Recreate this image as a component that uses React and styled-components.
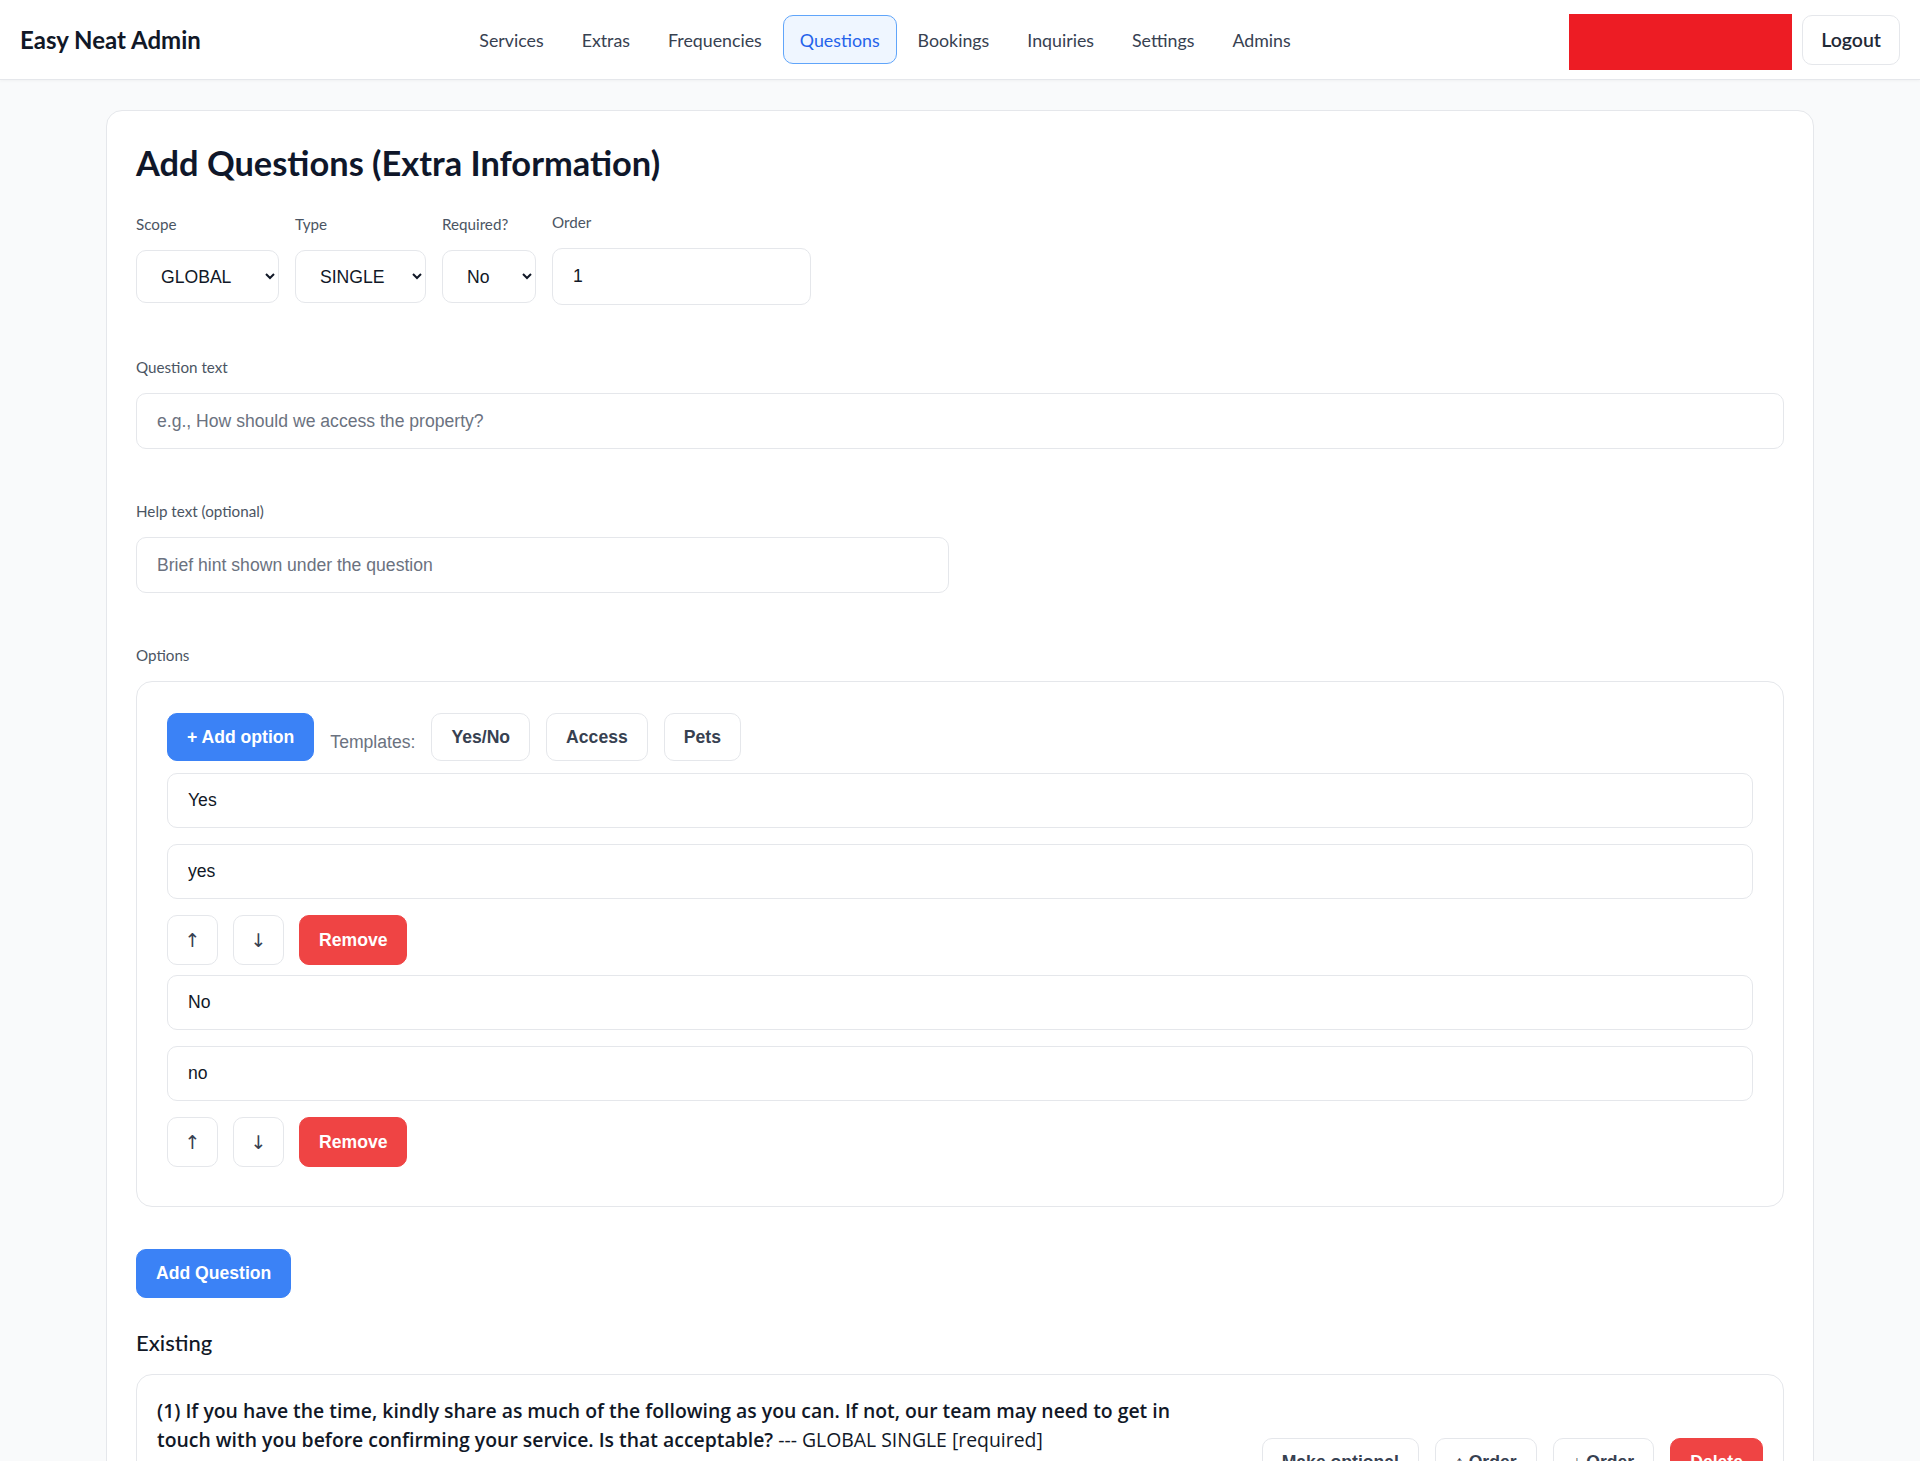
import React, { useState } from 'react';
import styled, { createGlobalStyle } from 'styled-components';

const GlobalStyle = createGlobalStyle`
	body {
		margin: 0;
		background: #f9fafb;
		font-family: Lato, "Noto Sans", sans-serif;
		color: #111827;
	}
	* { box-sizing: border-box; }
`;

const Header = styled.header`
	height: 80px;
	display: flex;
	align-items: center;
	justify-content: space-between;
	padding: 0 20px;
	background: #fff;
	border-bottom: 1px solid #e5e7eb;
	box-shadow: 0 1px 3px rgba(0, 0, 0, 0.04);
`;

const Logo = styled.div`
	font-size: 24px;
	font-weight: 700;
	color: #111827;
`;

const Nav = styled.nav`
	display: flex;
	gap: 4px;
`;

const NavItem = styled.button`
	height: 49px;
	padding: 0 16px;
	border-radius: 10px;
	border: 1px solid ${p => (p.active ? '#60a5fa' : 'transparent')};
	background: ${p => (p.active ? '#eff6ff' : 'transparent')};
	color: ${p => (p.active ? '#2563eb' : '#374151')};
	font-family: Lato, "Noto Sans", sans-serif;
	font-size: 17.8px;
	cursor: pointer;
`;

const HeaderRight = styled.div`
	display: flex;
	align-items: center;
	gap: 10px;
`;

const Redacted = styled.div`
	width: 223px;
	height: 56px;
	margin-top: 4px;
	background: #ed1c24;
`;

const LogoutButton = styled.button`
	height: 50px;
	padding: 0 18px;
	border-radius: 10px;
	border: 1px solid #e5e7eb;
	background: #fff;
	color: #1f2937;
	font-family: Lato, "Noto Sans", sans-serif;
	font-size: 19.5px;
	font-weight: 600;
`;

const Card = styled.main`
	max-width: 1708px;
	margin: 30px auto 0;
	background: #fff;
	border: 1px solid #e5e7eb;
	border-radius: 16px;
	padding: 32px 29px 40px;
`;

const Title = styled.h1`
	margin: 0 0 29px;
	font-size: 34.4px;
	line-height: 40px;
	font-weight: 700;
	color: #0f172a;
`;

const Form = styled.div`
	display: flex;
	flex-direction: column;
	gap: 52px;
`;

const Row = styled.div`
	display: flex;
	align-items: center;
	gap: 16px;
`;

const Field = styled.div`
	display: flex;
	flex-direction: column;
`;

const Label = styled.label`
	display: block;
	font-size: 15.2px;
	line-height: 20px;
	color: #4b5563;
	margin-bottom: 16px;
`;

const Select = styled.select`
	width: ${p => p.w}px;
	height: 53px;
	padding: 0 8px 0 20px;
	border: 1px solid #e5e7eb;
	border-radius: 10px;
	background: #fff;
	font-family: "Liberation Sans", Arial, sans-serif;
	font-size: 17.6px;
	color: #111827;
`;

const Input = styled.input`
	width: ${p => (p.w ? `${p.w}px` : '100%')};
	height: ${p => p.h || 56}px;
	padding: 0 20px;
	border: 1px solid #e5e7eb;
	border-radius: 10px;
	background: #fff;
	font-family: "Liberation Sans", Arial, sans-serif;
	font-size: 17.6px;
	color: #111827;
	&::placeholder {
		color: #6b7280;
	}
`;

const OptionsBox = styled.div`
	border: 1px solid #e5e7eb;
	border-radius: 16px;
	padding: 31px 30px 29px;
`;

const Toolbar = styled.div`
	display: flex;
	align-items: center;
	gap: 16px;
	margin-bottom: 12px;
`;

const Button = styled.button`
	height: ${p => p.h || 48}px;
	padding: 0 19px;
	border-radius: 10px;
	border: 1px solid ${p => (p.variant === 'primary' ? '#3b82f6' : p.variant === 'danger' ? '#ef4444' : '#e5e7eb')};
	background: ${p => (p.variant === 'primary' ? '#3b82f6' : p.variant === 'danger' ? '#ef4444' : '#fff')};
	color: ${p => (p.variant === 'primary' || p.variant === 'danger' ? '#fff' : '#374151')};
	font-family: "Liberation Sans", Arial, "DejaVu Sans", sans-serif;
	font-size: 17.6px;
	font-weight: 700;
	white-space: nowrap;
	cursor: pointer;
`;

const ArrowButton = styled.button`
	width: 51px;
	height: 50px;
	border-radius: 10px;
	border: 1px solid #e5e7eb;
	background: #fff;
	color: #374151;
	font-family: "DejaVu Sans", sans-serif;
	font-size: 19px;
	font-weight: 400;
`;

const TemplatesLabel = styled.span`
	font-family: "Liberation Sans", Arial, sans-serif;
	font-size: 17.6px;
	color: #6b7280;
	padding-top: 10px;
`;

const OptionBlock = styled.div`
	display: grid;
	gap: 16px;
	margin-bottom: 10px;
`;

const OptionActions = styled.div`
	display: flex;
	gap: 15px;
`;

const SubmitRow = styled.div`
	margin-top: 42px;
`;

const SectionTitle = styled.h2`
	margin: 30px 0 16px;
	font-size: 22px;
	line-height: 30px;
	font-weight: 500;
	color: #111827;
`;

const QuestionCard = styled.div`
	display: flex;
	align-items: center;
	gap: 16px;
	border: 1px solid #e5e7eb;
	border-radius: 16px;
	padding: 21px 20px;
`;

const QuestionInfo = styled.div`
	flex: 1;
`;

const QuestionText = styled.div`
	font-family: "Open Sans", "Noto Sans", sans-serif;
	font-size: 19.4px;
	line-height: 29px;
	color: #111827;
	padding-right: 40px;
`;

const Strong = styled.span`
	font-weight: 600;
`;

const QuestionMeta = styled.div`
	margin-top: 15px;
	font-size: 15px;
	line-height: 22px;
	color: #4b5563;
`;

const QuestionActions = styled.div`
	display: flex;
	gap: 16px;
`;

const navItems = ['Services', 'Extras', 'Frequencies', 'Questions', 'Bookings', 'Inquiries', 'Settings', 'Admins'];

export default function App() {
	const [options, setOptions] = useState([
		{ label: 'Yes', value: 'yes' },
		{ label: 'No', value: 'no' },
	]);

	const updateOption = (index, key, value) => {
		setOptions(options.map((o, i) => (i === index ? { ...o, [key]: value } : o)));
	};

	return (
		<>
			<GlobalStyle />
			<Header>
				<Logo>Easy Neat Admin</Logo>
				<Nav>
					{navItems.map(item => (
						<NavItem key={item} active={item === 'Questions'}>
							{item}
						</NavItem>
					))}
				</Nav>
				<HeaderRight>
					<Redacted />
					<LogoutButton>Logout</LogoutButton>
				</HeaderRight>
			</Header>

			<Card>
				<Title>Add Questions (Extra Information)</Title>
				<Form>
					<Row>
						<Field>
							<Label>Scope</Label>
							<Select w={143} defaultValue="GLOBAL">
								<option>GLOBAL</option>
								<option>SERVICE</option>
							</Select>
						</Field>
						<Field>
							<Label>Type</Label>
							<Select w={131} defaultValue="SINGLE">
								<option>SINGLE</option>
								<option>MULTI</option>
								<option>TEXT</option>
							</Select>
						</Field>
						<Field>
							<Label>Required?</Label>
							<Select w={94} defaultValue="No">
								<option>No</option>
								<option>Yes</option>
							</Select>
						</Field>
						<Field>
							<Label>Order</Label>
							<Input w={259} h={57} defaultValue="1" />
						</Field>
					</Row>

					<Field>
						<Label>Question text</Label>
						<Input placeholder="e.g., How should we access the property?" />
					</Field>

					<Field>
						<Label>Help text (optional)</Label>
						<Input w={813} placeholder="Brief hint shown under the question" />
					</Field>

					<Field>
						<Label>Options</Label>
						<OptionsBox>
							<Toolbar>
								<Button variant="primary">+ Add option</Button>
								<TemplatesLabel>Templates:</TemplatesLabel>
								<Button>Yes/No</Button>
								<Button>Access</Button>
								<Button>Pets</Button>
							</Toolbar>
							{options.map((o, i) => (
								<OptionBlock key={i}>
									<Input h={55} value={o.label} onChange={e => updateOption(i, 'label', e.target.value)} />
									<Input h={55} value={o.value} onChange={e => updateOption(i, 'value', e.target.value)} />
									<OptionActions>
										<ArrowButton>↑</ArrowButton>
										<ArrowButton>↓</ArrowButton>
										<Button variant="danger" h={50}>Remove</Button>
									</OptionActions>
								</OptionBlock>
							))}
						</OptionsBox>
					</Field>
				</Form>

				<SubmitRow>
					<Button variant="primary" h={49}>Add Question</Button>
				</SubmitRow>

				<SectionTitle>Existing</SectionTitle>
				<QuestionCard>
					<QuestionInfo>
						<QuestionText>
							<Strong>
								(1) If you have the time, kindly share as much of the following as you can. If not, our team may need to get in touch with you before confirming your service. Is that acceptable?
							</Strong>{' '}
							--- GLOBAL SINGLE [required]
						</QuestionText>
						<QuestionMeta>Options: Yes (yes), No (no)</QuestionMeta>
						<QuestionMeta>Order: 1</QuestionMeta>
					</QuestionInfo>
					<QuestionActions>
						<Button h={49}>Make optional</Button>
						<Button h={49}>↑ Order</Button>
						<Button h={49}>↓ Order</Button>
						<Button variant="danger" h={49}>Delete</Button>
					</QuestionActions>
				</QuestionCard>
			</Card>
		</>
	);
}
